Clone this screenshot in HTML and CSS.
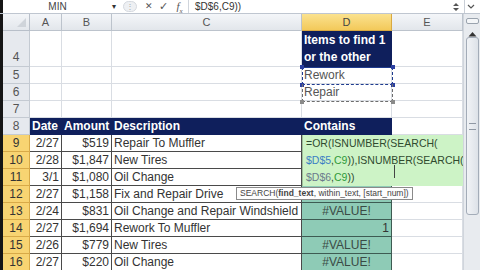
FILE: index.html
```html
<!DOCTYPE html>
<html lang="en">
<head>
    <meta charset="UTF-8">
    <title>Contains - Excel</title>
    <link rel="stylesheet" href="styles.css">
</head>
<body>
    <div class="formula-bar">
        <div class="edge"></div>
        <div class="name-box">MIN</div>
        <div class="name-drop">&#9662;</div>
        <div class="fb-grip">&#8942;</div>
        <div class="fb-btn cancel">&#10005;</div>
        <div class="fb-btn enter">&#10003;</div>
        <div class="fb-btn fx">f<sub>x</sub></div>
        <div class="formula-text">$D$6,C9))</div>
        <div class="fb-spin">
            <svg width="10" height="12" viewBox="0 0 10 12"><path d="M2 5 L5 2 L8 5 Z M2 7 L5 10 L8 7 Z" fill="#555"/></svg>
        </div>
        <div class="fb-expand">
            <svg width="8" height="6" viewBox="0 0 8 6"><path d="M1 1 L4 4 L7 1" stroke="#555" fill="none" stroke-width="1.2"/></svg>
        </div>
    </div>

    <div class="sheet">
        <div class="edge"></div>
        <div class="grid">
            <!-- column headers -->
            <div class="corner"><span class="corner-tri"></span></div>
            <div class="col-hdr">A</div>
            <div class="col-hdr">B</div>
            <div class="col-hdr">C</div>
            <div class="col-hdr active">D</div>
            <div class="col-hdr">E</div>

            <!-- row 4 -->
            <div class="row-hdr tall">4</div>
            <div class="cell"></div>
            <div class="cell"></div>
            <div class="cell"></div>
            <div class="cell navy wrap">Items to find 1<br>or the other</div>
            <div class="cell"></div>

            <!-- row 5 -->
            <div class="row-hdr">5</div>
            <div class="cell"></div>
            <div class="cell"></div>
            <div class="cell"></div>
            <div class="cell list">Rework</div>
            <div class="cell"></div>

            <!-- row 6 -->
            <div class="row-hdr">6</div>
            <div class="cell"></div>
            <div class="cell"></div>
            <div class="cell"></div>
            <div class="cell list">Repair</div>
            <div class="cell"></div>

            <!-- row 7 -->
            <div class="row-hdr">7</div>
            <div class="cell"></div>
            <div class="cell"></div>
            <div class="cell"></div>
            <div class="cell"></div>
            <div class="cell"></div>

            <!-- row 8: table header -->
            <div class="row-hdr">8</div>
            <div class="cell navy">Date</div>
            <div class="cell navy">Amount</div>
            <div class="cell navy">Description</div>
            <div class="cell navy">Contains</div>
            <div class="cell"></div>

            <!-- rows 9-16 -->
            <div class="row-hdr sel">9</div>
            <div class="cell tbl num">2/27</div>
            <div class="cell tbl num">$519</div>
            <div class="cell tbl">Repair To Muffler</div>
            <div class="cell tbl"></div>
            <div class="cell"></div>

            <div class="row-hdr sel">10</div>
            <div class="cell tbl num">2/28</div>
            <div class="cell tbl num">$1,847</div>
            <div class="cell tbl">New Tires</div>
            <div class="cell tbl"></div>
            <div class="cell"></div>

            <div class="row-hdr sel">11</div>
            <div class="cell tbl num">3/1</div>
            <div class="cell tbl num">$1,080</div>
            <div class="cell tbl">Oil Change</div>
            <div class="cell tbl"></div>
            <div class="cell"></div>

            <div class="row-hdr sel">12</div>
            <div class="cell tbl num">2/27</div>
            <div class="cell tbl num">$1,158</div>
            <div class="cell tbl">Fix and Repair Drive</div>
            <div class="cell tbl teal"></div>
            <div class="cell"></div>

            <div class="row-hdr sel">13</div>
            <div class="cell tbl num">2/24</div>
            <div class="cell tbl num">$831</div>
            <div class="cell tbl">Oil Change and Repair Windshield</div>
            <div class="cell tbl teal err">#VALUE!</div>
            <div class="cell"></div>

            <div class="row-hdr sel">14</div>
            <div class="cell tbl num">2/27</div>
            <div class="cell tbl num">$1,694</div>
            <div class="cell tbl">Rework To Muffler</div>
            <div class="cell tbl teal num">1</div>
            <div class="cell"></div>

            <div class="row-hdr sel">15</div>
            <div class="cell tbl num">2/26</div>
            <div class="cell tbl num">$779</div>
            <div class="cell tbl">New Tires</div>
            <div class="cell tbl teal err">#VALUE!</div>
            <div class="cell"></div>

            <div class="row-hdr sel">16</div>
            <div class="cell tbl num">2/27</div>
            <div class="cell tbl num">$220</div>
            <div class="cell tbl">Oil Change</div>
            <div class="cell tbl teal err">#VALUE!</div>
            <div class="cell"></div>
        </div>

        <div class="vscroll">
            <div class="split-box"></div>
            <div class="arrow-up">
                <svg width="9" height="6" viewBox="0 0 9 6"><path d="M0.5 5.5 L4.5 1 L8.5 5.5 Z" fill="#333"/></svg>
            </div>
            <div class="thumb"><span class="grip"></span></div>
        </div>
    </div>

    <!-- reference boxes around D5 and D6 -->
    <div class="ref-box ref-d5">
        <span class="handle tl"></span><span class="handle tr"></span>
        <span class="handle bl"></span><span class="handle br"></span>
    </div>
    <div class="ref-box ref-d6">
        <span class="handle bl gray"></span><span class="handle br gray"></span>
    </div>

    <!-- in-cell editor for D9 -->
    <div class="editor">
        <div>=OR(ISNUMBER(SEARCH(</div>
        <div><span class="ref-blue">$D$5</span>,<span class="ref-green">C9</span>)),ISNUMBER(SEARCH(</div>
        <div><span class="ref-gray">$D$6</span>,<span class="ref-green">C9</span>))</div>
    </div>
    <div class="ibeam"></div>

    <div class="tooltip">SEARCH(<b>find_text</b>, within_text, [start_num])</div>
</body>
</html>
```

FILE: styles.css
```css
body {
    margin: 0;
    width: 480px;
    height: 270px;
    overflow: hidden;
    position: relative;
    font-family: 'Liberation Sans', Arial, sans-serif;
    font-size: 12px;
    color: #333;
    background-color: #fff;
}
.edge {
    width: 3px;
    background-color: #151515;
    flex: none;
}

/* formula bar */
.formula-bar {
    display: flex;
    height: 14px;
    box-sizing: border-box;
    border-bottom: 1px solid #bfc6d0;
    align-items: stretch;
    font-size: 10px;
}
.name-box {
    width: 109px;
    text-align: center;
    line-height: 13px;
    color: #444;
}
.name-drop {
    width: 8px;
    font-size: 8px;
    line-height: 13px;
    color: #333;
}
.fb-grip {
    width: 12px;
    margin: 1px 4px 1px 3px;
    border: 1px solid #d5d9df;
    border-radius: 6px;
    background-color: #eef0f3;
    color: #aaa;
    font-size: 8px;
    line-height: 10px;
    text-align: center;
}
.fb-btn {
    width: 15px;
    text-align: center;
    line-height: 13px;
    color: #555;
}
.cancel {
    font-size: 9px;
}
.enter {
    font-size: 11px;
}
.fx {
    font-family: 'Liberation Serif', serif;
    font-style: italic;
    font-size: 11px;
    width: 17px;
    border-right: 1px solid #d0d5dc;
}
.fx sub {
    font-size: 7px;
}
.formula-text {
    flex: 1;
    padding-left: 6px;
    line-height: 13px;
    font-size: 10px;
    color: #333;
}
.fb-spin {
    width: 12px;
    display: flex;
    align-items: center;
    justify-content: center;
}
.fb-expand {
    width: 12px;
    margin: 0 3px 0 2px;
    border-left: 1px solid #c9ced6;
    display: flex;
    align-items: center;
    justify-content: center;
}

/* sheet */
.sheet {
    display: flex;
    height: 256px;
}
.grid {
    display: grid;
    grid-template-columns: 27px 32px 50px 190px 90px 71px;
    grid-template-rows: 17px 36px repeat(12, 17px);
}
.corner, .col-hdr, .row-hdr, .cell {
    box-sizing: border-box;
    border-right: 1px solid #d9dde3;
    border-bottom: 1px solid #d9dde3;
    white-space: nowrap;
    overflow: hidden;
}
.corner {
    background: linear-gradient(#f3f5f8, #e3e7ec);
    border-color: #b8bfc9;
    position: relative;
}
.corner-tri {
    position: absolute;
    right: 3px;
    bottom: 3px;
    width: 0;
    height: 0;
    border-left: 9px solid transparent;
    border-bottom: 9px solid #cfd4da;
}
.col-hdr {
    background: linear-gradient(#f4f6f9, #e2e6eb);
    border-color: #bcc3cc;
    text-align: center;
    line-height: 16px;
    color: #555;
    font-size: 11px;
}
.col-hdr.active {
    background: linear-gradient(#fbe28f, #f3c95a);
    border-color: #d9a941;
    color: #444;
}
.row-hdr {
    background-color: #e6e9ee;
    border-color: #c4cad2;
    text-align: center;
    line-height: 17px;
    color: #555;
    font-size: 12px;
}
.row-hdr.tall {
    line-height: 52px;
}
.row-hdr.sel {
    background-color: #f8d472;
    border-color: #d8aa48;
    color: #333;
}
.cell {
    line-height: 16px;
    padding: 0 2px;
    color: #333;
}
.num {
    text-align: right;
}
.navy {
    background-color: #0f1f5c;
    border-color: #0f1f5c;
    color: #fff;
    font-weight: bold;
}
.wrap {
    line-height: 17px;
    padding-top: 1px;
}
.list {
    color: #555;
}
.tbl {
    border-color: #4a4a4a;
}
.teal {
    background-color: #8ecbb6;
    border-right-color: #3d5b52;
    border-bottom-color: #3d5b52;
}
.err {
    text-align: center;
    color: #3a4a45;
}

/* vertical scrollbar */
.vscroll {
    width: 17px;
    background-color: #e8ebef;
    border-left: 1px solid #d0d5dc;
    box-sizing: border-box;
    display: flex;
    flex-direction: column;
    align-items: center;
}
.split-box {
    width: 11px;
    height: 4px;
    margin-top: 4px;
    border: 1px solid #9aa3ae;
    border-radius: 2px;
    background-color: #f4f6f8;
}
.arrow-up {
    margin-top: 2px;
    height: 8px;
}
.thumb {
    width: 13px;
    height: 178px;
    margin-top: 3px;
    box-sizing: border-box;
    border: 1px solid #a3acb8;
    border-radius: 3px;
    background: linear-gradient(to right, #f1f3f6, #dde2e8);
    display: flex;
    align-items: center;
    justify-content: center;
}
.grip {
    width: 7px;
    height: 5px;
    border-top: 1px solid #8f98a4;
    border-bottom: 1px solid #8f98a4;
}

/* overlays */
.ref-box {
    position: absolute;
    box-sizing: border-box;
    border: 1px dashed #5a5f8a;
}
.ref-d5 {
    left: 302px;
    top: 67px;
    width: 91px;
    height: 18px;
    border-top-style: solid;
    border-color: #1f3b8f;
}
.ref-d6 {
    left: 302px;
    top: 84px;
    width: 91px;
    height: 18px;
    border-color: #6d6d6d;
    border-top: none;
}
.handle {
    position: absolute;
    width: 4px;
    height: 4px;
    background-color: #2b3fa0;
}
.handle.gray {
    background-color: #8a8a8a;
}
.tl { left: -3px; top: -3px; }
.tr { right: -3px; top: -3px; }
.bl { left: -3px; bottom: -3px; }
.br { right: -3px; bottom: -3px; }

.editor {
    position: absolute;
    left: 302px;
    top: 135px;
    width: 161px;
    height: 51px;
    padding-left: 3px;
    box-sizing: border-box;
    background-color: #cdf3c6;
    border-left: 1px solid #9fbf9a;
    font-size: 10.5px;
    line-height: 17px;
    color: #2f4a2f;
    white-space: nowrap;
    overflow: hidden;
}
.ref-blue {
    color: #3c7fc4;
}
.ref-green {
    color: #2f9a3a;
}
.ref-gray {
    color: #6b7a8c;
}
.ibeam {
    position: absolute;
    left: 394px;
    top: 165px;
    width: 1px;
    height: 13px;
    background-color: #444;
}
.tooltip {
    position: absolute;
    left: 236px;
    top: 187px;
    height: 13px;
    padding: 0 3px;
    box-sizing: border-box;
    background-color: #fdfdfd;
    border: 1px solid #8a8a8a;
    font-size: 8.5px;
    line-height: 11px;
    color: #444;
    white-space: nowrap;
}
```
